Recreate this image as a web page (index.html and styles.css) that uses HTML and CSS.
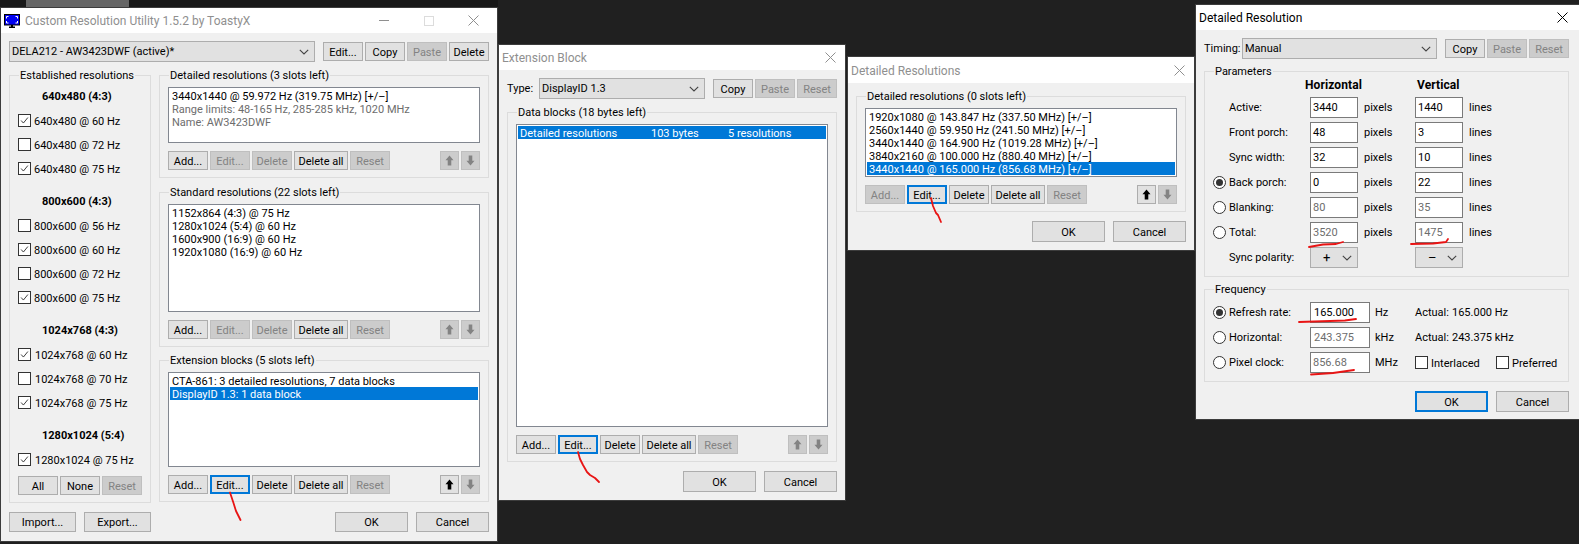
FILE: index.html
```html
<!DOCTYPE html>
<html lang="en">
<head>
<meta charset="utf-8">
<title>Custom Resolution Utility</title>
<link rel="stylesheet" href="styles.css">
</head>
<body>
<svg class="defs" aria-hidden="true">
  <symbol id="tick" viewBox="0 0 13 13"><path d="M2.5 6.5 5.2 9.5 10.5 3" fill="none" stroke="#333" stroke-width="1.1"/></symbol>
  <symbol id="chev" viewBox="0 0 10 6"><path d="M.8.8 5 5 9.200.8" fill="none" stroke="#444" stroke-width="1.1"/></symbol>
  <symbol id="up" viewBox="0 0 19 19"><path d="M9.500 4 14 9.200H11.500V15H7.500V9.200H5Z"/></symbol>
  <symbol id="down" viewBox="0 0 19 19"><path d="M9.500 15 14 9.800H11.500V4H7.500V9.800H5Z"/></symbol>
  <symbol id="x" viewBox="0 0 11 11"><path d="M.5.500 10.500 10.500M10.500.500.5 10.500" fill="none" stroke="currentColor" stroke-width="1"/></symbol>
</svg>

<div class="bg-strip"></div>
<div class="bg-tab"></div>

<section class="win w1">
  <header class="title inactive">
    <svg class="app-icon" viewBox="0 0 16 14"><path fill="#000" d="M0 0H16V11.500H9V12.500H11V14H5V12.500H7V11.500H0Z"/><rect x="1" y="1" width="14" height="9.500" fill="#0000f0"/><path fill="none" stroke="#fff" d="M2.500 4.500V2.500H4.500M11.500 2.500H13.500V4.500M2.500 7V9H4.500M11.500 9H13.500V7"/></svg>
    <span class="title-text">Custom Resolution Utility 1.5.2 by ToastyX</span>
    <span class="caps">
      <span class="cap"><span class="min"></span></span>
      <span class="cap"><span class="max"></span></span>
      <span class="cap"><svg class="close"><use href="#x"/></svg></span>
    </span>
  </header>
  <div class="body">
    <div class="toprow">
      <span class="combo c-monitor"><span>DELA212 - AW3423DWF (active)*</span><svg class="chev"><use href="#chev"/></svg></span>
      <span class="btns">
        <button class="btn">Edit...</button><button class="btn">Copy</button><button class="btn off">Paste</button><button class="btn">Delete</button>
      </span>
    </div>
    <div class="columns">
      <div class="group established">
        <div class="gt">Established resolutions</div>
        <div class="res-head first">640x480 (4:3)</div>
        <div class="ck-row"><svg class="ck"><use href="#tick"/></svg>640x480 @ 60 Hz</div>
        <div class="ck-row"><span class="ck"></span>640x480 @ 72 Hz</div>
        <div class="ck-row"><svg class="ck"><use href="#tick"/></svg>640x480 @ 75 Hz</div>
        <div class="res-head">800x600 (4:3)</div>
        <div class="ck-row"><span class="ck"></span>800x600 @ 56 Hz</div>
        <div class="ck-row"><svg class="ck"><use href="#tick"/></svg>800x600 @ 60 Hz</div>
        <div class="ck-row"><span class="ck"></span>800x600 @ 72 Hz</div>
        <div class="ck-row"><svg class="ck"><use href="#tick"/></svg>800x600 @ 75 Hz</div>
        <div class="res-head">1024x768 (4:3)</div>
        <div class="ck-row wide"><svg class="ck"><use href="#tick"/></svg>1024x768 @ 60 Hz</div>
        <div class="ck-row wide"><span class="ck"></span>1024x768 @ 70 Hz</div>
        <div class="ck-row wide"><svg class="ck"><use href="#tick"/></svg>1024x768 @ 75 Hz</div>
        <div class="res-head">1280x1024 (5:4)</div>
        <div class="ck-row wide"><svg class="ck"><use href="#tick"/></svg>1280x1024 @ 75 Hz</div>
        <div class="btn-row est-btns"><button class="btn">All</button><button class="btn">None</button><button class="btn off">Reset</button></div>
      </div>
      <div class="right-col">
        <div class="group">
          <div class="gt">Detailed resolutions (3 slots left)</div>
          <div class="list h-detail">
            <div class="li">3440x1440 @ 59.972 Hz (319.75 MHz) [+/–]</div>
            <div class="li dim">Range limits: 48-165 Hz, 285-285 kHz, 1020 MHz</div>
            <div class="li dim">Name: AW3423DWF</div>
          </div>
          <div class="btn-row">
            <button class="btn">Add...</button><button class="btn off">Edit...</button><button class="btn off">Delete</button><button class="btn wide">Delete all</button><button class="btn off">Reset</button>
            <span class="arrows"><button class="btn arrow off"><svg><use href="#up"/></svg></button><button class="btn arrow off"><svg><use href="#down"/></svg></button></span>
          </div>
        </div>
        <div class="group g-std">
          <div class="gt">Standard resolutions (22 slots left)</div>
          <div class="list h-std">
            <div class="li">1152x864 (4:3) @ 75 Hz</div>
            <div class="li">1280x1024 (5:4) @ 60 Hz</div>
            <div class="li">1600x900 (16:9) @ 60 Hz</div>
            <div class="li">1920x1080 (16:9) @ 60 Hz</div>
          </div>
          <div class="btn-row">
            <button class="btn">Add...</button><button class="btn off">Edit...</button><button class="btn off">Delete</button><button class="btn wide">Delete all</button><button class="btn off">Reset</button>
            <span class="arrows"><button class="btn arrow off"><svg><use href="#up"/></svg></button><button class="btn arrow off"><svg><use href="#down"/></svg></button></span>
          </div>
        </div>
        <div class="group g-ext">
          <div class="gt">Extension blocks (5 slots left)</div>
          <div class="list h-ext">
            <div class="li">CTA-861: 3 detailed resolutions, 7 data blocks</div>
            <div class="li sel">DisplayID 1.3: 1 data block</div>
          </div>
          <div class="btn-row">
            <button class="btn">Add...</button><button class="btn focus">Edit...</button><button class="btn">Delete</button><button class="btn wide">Delete all</button><button class="btn off">Reset</button>
            <span class="arrows"><button class="btn arrow"><svg><use href="#up"/></svg></button><button class="btn arrow off"><svg><use href="#down"/></svg></button></span>
          </div>
        </div>
      </div>
    </div>
    <div class="foot f-main">
      <button class="btn big">Import...</button><button class="btn big">Export...</button>
      <span class="foot-right"><button class="btn dlg">OK</button><button class="btn dlg">Cancel</button></span>
    </div>
  </div>
</section>

<section class="win w2">
  <header class="title inactive"><span class="title-text">Extension Block</span><span class="caps"><span class="cap"><svg class="close"><use href="#x"/></svg></span></span></header>
  <div class="body">
    <div class="toprow">
      <span class="lbl l-type">Type:</span>
      <span class="combo c-type"><span>DisplayID 1.3</span><svg class="chev"><use href="#chev"/></svg></span>
      <span class="btns"><button class="btn">Copy</button><button class="btn off">Paste</button><button class="btn off">Reset</button></span>
    </div>
    <div class="group g-blocks">
      <div class="gt">Data blocks (18 bytes left)</div>
      <div class="list h-blocks">
        <div class="li sel cols"><span class="c1">Detailed resolutions</span><span class="c2">103 bytes</span><span>5 resolutions</span></div>
      </div>
      <div class="btn-row">
        <button class="btn">Add...</button><button class="btn focus">Edit...</button><button class="btn">Delete</button><button class="btn wide">Delete all</button><button class="btn off">Reset</button>
        <span class="arrows"><button class="btn arrow off"><svg><use href="#up"/></svg></button><button class="btn arrow off"><svg><use href="#down"/></svg></button></span>
      </div>
    </div>
    <div class="foot"><span class="foot-right"><button class="btn dlg tall">OK</button><button class="btn dlg tall">Cancel</button></span></div>
  </div>
</section>

<section class="win w3">
  <header class="title inactive"><span class="title-text">Detailed Resolutions</span><span class="caps"><span class="cap"><svg class="close"><use href="#x"/></svg></span></span></header>
  <div class="body">
    <div class="group g-res">
      <div class="gt">Detailed resolutions (0 slots left)</div>
      <div class="list h-res">
        <div class="li">1920x1080 @ 143.847 Hz (337.50 MHz) [+/–]</div>
        <div class="li">2560x1440 @ 59.950 Hz (241.50 MHz) [+/–]</div>
        <div class="li">3440x1440 @ 164.900 Hz (1019.28 MHz) [+/–]</div>
        <div class="li">3840x2160 @ 100.000 Hz (880.40 MHz) [+/–]</div>
        <div class="li sel">3440x1440 @ 165.000 Hz (856.68 MHz) [+/–]</div>
      </div>
      <div class="btn-row">
        <button class="btn off">Add...</button><button class="btn focus">Edit...</button><button class="btn">Delete</button><button class="btn wide">Delete all</button><button class="btn off">Reset</button>
        <span class="arrows"><button class="btn arrow"><svg><use href="#up"/></svg></button><button class="btn arrow off"><svg><use href="#down"/></svg></button></span>
      </div>
    </div>
    <div class="foot"><span class="foot-right"><button class="btn dlg tall">OK</button><button class="btn dlg tall">Cancel</button></span></div>
  </div>
</section>

<section class="win w4">
  <header class="title"><span class="title-text">Detailed Resolution</span><span class="caps"><span class="cap"><svg class="close"><use href="#x"/></svg></span></span></header>
  <div class="body">
    <div class="toprow">
      <span class="lbl l-timing">Timing:</span>
      <span class="combo c-timing"><span>Manual</span><svg class="chev"><use href="#chev"/></svg></span>
      <span class="btns"><button class="btn">Copy</button><button class="btn off">Paste</button><button class="btn off">Reset</button></span>
    </div>
    <div class="group g-params">
      <div class="gt gt-tight">Parameters</div>
      <div class="param-head"><span class="ph-h">Horizontal</span><span class="ph-v">Vertical</span></div>
      <div class="param-grid">
        <span></span><span>Active:</span><span class="field">3440</span><span class="unit">pixels</span><span class="field">1440</span><span class="unit">lines</span>
        <span></span><span>Front porch:</span><span class="field">48</span><span class="unit">pixels</span><span class="field">3</span><span class="unit">lines</span>
        <span></span><span>Sync width:</span><span class="field">32</span><span class="unit">pixels</span><span class="field">10</span><span class="unit">lines</span>
        <span class="radio on"></span><span>Back porch:</span><span class="field">0</span><span class="unit">pixels</span><span class="field">22</span><span class="unit">lines</span>
        <span class="radio"></span><span>Blanking:</span><span class="field dis">80</span><span class="unit">pixels</span><span class="field dis">35</span><span class="unit">lines</span>
        <span class="radio"></span><span>Total:</span><span class="field dis">3520</span><span class="unit">pixels</span><span class="field dis">1475</span><span class="unit">lines</span>
        <span></span><span>Sync polarity:</span><span class="combo mini"><span>+</span><svg class="chev"><use href="#chev"/></svg></span><span></span><span class="combo mini"><span>–</span><svg class="chev"><use href="#chev"/></svg></span><span></span>
      </div>
    </div>
    <div class="group g-freq">
      <div class="gt gt-freq">Frequency</div>
      <div class="freq-grid">
        <span class="radio on"></span><span>Refresh rate:</span><span class="field f-b">165.000</span><span class="unit">Hz</span><span class="actual"><span class="a-l">Actual:</span><span>165.000 Hz</span></span>
        <span class="radio"></span><span>Horizontal:</span><span class="field dis f-b">243.375</span><span class="unit">kHz</span><span class="actual"><span class="a-l">Actual:</span><span>243.375 kHz</span></span>
        <span class="radio"></span><span>Pixel clock:</span><span class="field dis">856.68</span><span class="unit">MHz</span><span class="actual"><span class="ck-row inter"><span class="ck"></span>Interlaced</span><span class="ck-row"><span class="ck"></span>Preferred</span></span>
      </div>
    </div>
    <div class="foot"><span class="foot-right"><button class="btn dlg tall focus">OK</button><button class="btn dlg tall">Cancel</button></span></div>
  </div>
</section>

<svg class="ink" viewBox="0 0 1579 544" aria-hidden="true">
  <path d="M230 492.500 233.500 503 236 511 240.500 520"/>
  <path d="M578 452 580 459 583 465 587 472 590 475 595 478 599 482"/>
  <path d="M931 198 933 206 936 213 938 215 941 222"/>
  <path d="M1309 247 1323 244.500 1336 244 1343 242"/>
  <path d="M1411 244 1433 243.500 1446 242 1448 239"/>
  <path d="M1299 322 1330 321 1345 320.500 1356 319"/>
  <path d="M1311 374.500 1333 373 1354 370"/>
</svg>
</body>
</html>
```

FILE: styles.css
```css
* { box-sizing: border-box; }
html, body { margin: 0; padding: 0; }
body {
  position: relative;
  width: 1579px;
  height: 544px;
  overflow: hidden;
  background: #202020;
  font: 11px/13px Roboto, "Open Sans", "Liberation Sans", sans-serif;
  color: #000;
}
.defs { position: absolute; width: 0; height: 0; }
.bg-strip { position: absolute; left: 0; top: 0; width: 498px; height: 7px; background: #181818; }
.bg-tab { position: absolute; left: 26px; top: 0; width: 103px; height: 7px; background: #666; }

.win {
  position: absolute;
  display: flex;
  flex-direction: column;
  background: #f0f0f0;
  border: 1px solid #3c3c3c;
}
.w1 { left: 0; top: 7px; width: 498px; height: 535px; }
.w2 { left: 498px; top: 44px; width: 348px; height: 457px; }
.w3 { left: 847px; top: 56px; width: 348px; height: 195px; }
.w4 { left: 1195px; top: 4px; width: 384px; height: 416px; border-right: 0; }

.title {
  display: flex;
  align-items: center;
  flex: none;
  height: 25px;
  padding: 2px 0 0 3px;
  background: #fff;
  font-size: 12px;
}
.w3 .title { height: 26px; }
.title.inactive { color: #8f8f8f; }
.title-text { flex: 1; }
.app-icon { width: 16px; height: 14px; margin: -1px 5px 0 0; flex: none; }
.caps { display: flex; margin-top: -2px; }
.cap { display: flex; align-items: center; justify-content: center; width: 30px; height: 25px; }
.w1 .cap { width: 45px; }
.w1 .caps { margin-right: 1px; }
.min { width: 10px; height: 1px; background: #8f8f8f; }
.max { width: 10px; height: 10px; border: 1px solid #dcdcdc; }
.close { width: 11px; height: 11px; }
.w4 .close { margin-right: 4px; }

.body { padding: 8px 8px 0; }
.w3 .body { padding-top: 13px; }
.w4 .body { padding-right: 10px; }

.toprow { display: flex; align-items: center; }
.btns { display: flex; gap: 2px; margin-left: 8px; }
.lbl { flex: none; }
.l-type { width: 32px; }
.l-timing { width: 38px; }

.combo {
  display: flex;
  align-items: center;
  justify-content: space-between;
  flex: none;
  height: 21px;
  padding: 0 4px 0 2px;
  background: #e1e1e1;
  border: 1px solid #adadad;
}
.c-monitor { width: 306px; }
.c-type { width: 166px; }
.c-timing { width: 195px; }
.chev { width: 10px; height: 6px; flex: none; margin-right: 1px; }
.combo.mini { width: 48px; padding-left: 12px; font-size: 13px; }

.btn {
  display: inline-flex;
  align-items: center;
  justify-content: center;
  flex: none;
  width: 40px;
  height: 19px;
  margin: 0;
  padding: 1px 0 0;
  background: #e1e1e1;
  border: 1px solid #adadad;
  color: #000;
  font: inherit;
}
.btn.off { background: #ccc; border-color: #bfbfbf; color: #838383; }
.btn.focus { border: 2px solid #0078d7; }
.btn.wide { width: 54px; }
.btn.big { width: 67px; height: 20px; }
.btn.dlg { width: 73px; height: 20px; }
.btn.dlg.tall { height: 21px; }
.btn.arrow { width: 19px; padding: 0; }
.btn.arrow svg { width: 17px; height: 17px; fill: #000; }
.btn.arrow.off svg { fill: #838383; }

.btn-row { display: flex; gap: 2px; margin-top: 8px; }
.arrows { display: flex; gap: 2px; margin-left: auto; }

.group { border: 1px solid #dcdcdc; padding: 0 8px 7px; }
.gt {
  width: fit-content;
  height: 16px;
  line-height: 18px;
  margin: -9px 0 4px 1px;
  padding: 0 1px;
  background: #f0f0f0;
  white-space: nowrap;
}
.gt-tight { margin-bottom: -2px; }
.gt-freq { margin-bottom: 3px; }

.columns { display: flex; gap: 8px; margin-top: 13px; }
.established { width: 142px; }
.established .gt { margin-bottom: 1px; }
.right-col { width: 330px; }
.g-std { margin-top: 14px; }
.g-ext { margin-top: 13px; }

.res-head { height: 24px; line-height: 26px; margin-top: 9px; padding-left: 24px; font-weight: 700; }
.res-head.first { margin-top: 0; }
.ck-row { display: flex; align-items: center; gap: 3px; height: 24px; padding-top: 2px; }
.ck-row.wide { gap: 4px; }
.ck {
  display: block;
  flex: none;
  width: 13px;
  height: 13px;
  margin-top: -2px;
  background: #fff;
  border: 1px solid #333;
}
.est-btns { margin-top: 5px; }

.list {
  padding: 1px;
  background: #fff;
  border: 1px solid #828790;
}
.h-detail { height: 56px; }
.h-std { height: 108px; }
.h-ext { height: 95px; }
.h-blocks { height: 303px; }
.h-res { height: 69px; }
.li { height: 13px; line-height: 15px; padding-left: 2px; white-space: nowrap; }
.li.dim { color: #6d6d6d; }
.li.sel { background: #0078d7; color: #fff; }
.cols { display: flex; }
.c1 { width: 131px; }
.c2 { width: 77px; }

.foot { display: flex; gap: 8px; margin-top: 9px; }
.foot-right { display: flex; gap: 8px; margin-left: auto; }
.g-blocks { margin-top: 13px; }

.g-params { margin-top: 12px; padding-bottom: 6px; }
.param-head { display: flex; align-items: flex-end; height: 15px; margin-bottom: 3px; font-size: 12px; font-weight: 700; letter-spacing: .1px; }
.ph-h { margin-left: 92px; width: 112px; }
.param-grid {
  display: grid;
  grid-template-columns: 16px 81px 48px 57px 48px auto;
  grid-auto-rows: 25px;
  align-items: center;
}
.g-freq { margin-top: 12px; padding-bottom: 6px; }
.freq-grid {
  display: grid;
  grid-template-columns: 16px 81px 60px 45px auto;
  grid-auto-rows: 25px;
  align-items: center;
}
.field {
  display: block;
  height: 21px;
  line-height: 19px;
  padding-left: 2px;
  background: #fff;
  border: 1px solid #7a7a7a;
}
.field.dis { color: #6d6d6d; }
.f-b { padding-left: 3px; }
.unit { padding-left: 6px; }
.freq-grid .unit { padding-left: 5px; }
.radio {
  position: relative;
  display: block;
  width: 13px;
  height: 13px;
  background: #fff;
  border: 1px solid #333;
  border-radius: 50%;
}
.radio.on::after {
  content: "";
  position: absolute;
  left: 2px;
  top: 2px;
  width: 7px;
  height: 7px;
  background: #333;
  border-radius: 50%;
}
.actual { display: flex; align-items: center; }
.a-l { width: 37px; }
.inter { width: 81px; }

.ink { position: absolute; left: 0; top: 0; width: 1579px; height: 544px; pointer-events: none; }
.ink path { fill: none; stroke: #e81414; stroke-width: 1.8; stroke-linecap: round; stroke-linejoin: round; }
```
